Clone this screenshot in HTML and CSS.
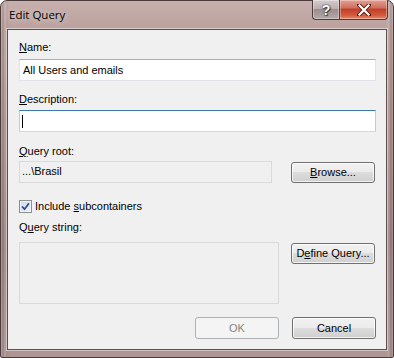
FILE: index.html
```html
<!DOCTYPE html>
<html>
<head>
<meta charset="utf-8">
<title>Edit Query</title>
<link rel="stylesheet" href="styles.css">
</head>
<body>
<div class="window">
  <div class="titlebar">
    <span class="title">Edit Query</span>
    <div class="caption-buttons">
      <div class="cap help"><span class="q">?</span></div>
      <div class="cap close">
        <svg width="14" height="12" viewBox="0 0 14 12"><path d="M2 1 L12 11 M12 1 L2 11" stroke="#5a1a12" stroke-width="4" stroke-linecap="square"/><path d="M2.5 1.5 L11.5 10.5 M11.5 1.5 L2.5 10.5" stroke="#ffffff" stroke-width="2.2" stroke-linecap="square"/></svg>
      </div>
    </div>
  </div>
  <div class="client">
    <div class="label l-name"><u>N</u>ame:</div>
    <div class="textbox">All Users and emails</div>
    <div class="label l-desc"><u>D</u>escription:</div>
    <div class="textbox focused"><span class="caret"></span></div>
    <div class="label l-root"><u>Q</u>uery root:</div>
    <div class="row row-root">
      <div class="readonly root-box">...\Brasil</div>
      <div class="button"><u>B</u>rowse...</div>
    </div>
    <div class="check-row">
      <span class="checkbox">
        <svg width="9" height="9" viewBox="0 0 9 9"><path d="M1 4.5 L3.5 7.2 L8 1.2" fill="none" stroke="#2a4f9a" stroke-width="1.8"/></svg>
      </span>
      <span>Include <u>s</u>ubcontainers</span>
    </div>
    <div class="label l-qs">Q<u>u</u>ery string:</div>
    <div class="row row-qs">
      <div class="readonly qs-box"></div>
      <div class="button">D<u>e</u>fine Query...</div>
    </div>
    <div class="row row-bottom">
      <div class="button disabled">OK</div>
      <div class="button">Cancel</div>
    </div>
  </div>
</div>
</body>
</html>
```

FILE: styles.css
```css
html, body {
  margin: 0;
  padding: 0;
  background: #ffffff;
}

.window {
  width: 394px;
  height: 358px;
  box-sizing: border-box;
  border: 1px solid #4a3a3a;
  border-radius: 7px 7px 2px 2px;
  background:
    linear-gradient(90deg, rgba(255,255,255,0.18) 0px, rgba(0,0,0,0.14) 2px, rgba(255,255,255,0.15) 4px, rgba(0,0,0,0.06) 6px, transparent 8px),
    linear-gradient(270deg, rgba(255,255,255,0.12) 0px, rgba(0,0,0,0.14) 2px, rgba(255,255,255,0.12) 4px, transparent 7px),
    linear-gradient(180deg, #c6afac 0px, #bba19e 30px, #ae9290 120px, #a08685 240px, #ae9694 358px);
  padding: 0 6px 7px 6px;
  display: flex;
  flex-direction: column;
  font-family: "Liberation Sans", Arial, sans-serif;
}

.titlebar {
  height: 28px;
  display: flex;
  align-items: flex-start;
  position: relative;
}

.title {
  font-family: "Open Sans", "Noto Sans", sans-serif;
  font-size: 11.5px;
  color: #000000;
  margin-top: 6px;
  margin-left: 2px;
  text-shadow: 0 0 6px rgba(255,255,255,0.7);
}

.caption-buttons {
  margin-left: auto;
  margin-right: -1px;
  display: flex;
  height: 20px;
  margin-top: -1px;
}

.cap {
  height: 20px;
  box-sizing: border-box;
  border: 1px solid #4c3d3d;
  border-top: none;
  display: flex;
  align-items: center;
  justify-content: center;
  box-shadow: inset 0 0 0 1px rgba(255,255,255,0.35);
}

.help {
  width: 27px;
  border-radius: 0 0 0 4px;
  border-right: none;
  background: linear-gradient(180deg, #d6cccc 0%, #bcaeae 45%, #9e8e8e 50%, #b4a8a8 100%);
}

.q {
  font-family: "Liberation Sans", Arial, sans-serif;
  font-weight: bold;
  font-size: 14px;
  color: #ffffff;
  text-shadow: 0 0 1px #333, 0 0 2px #333, 1px 1px 1px #444;
}

.close {
  width: 49px;
  border-radius: 0 0 4px 0;
  background: linear-gradient(180deg, #e3a194 0%, #d0705e 40%, #c0402a 50%, #d35a3c 80%, #e2876c 100%);
}

.client {
  flex: 1;
  background: #f0f0f0;
  border: 1px solid #5f4e4e;
  box-shadow: 0 0 0 1px rgba(255,255,255,0.45);
  padding: 0 10px 0 11px;
  font-size: 11px;
  color: #000000;
  display: flex;
  flex-direction: column;
}

.label {
  height: 13px;
  line-height: 13px;
}

.l-name { margin-top: 11px; margin-bottom: 5px; }
.l-desc { margin-top: 12px; margin-bottom: 4px; }
.l-root { margin-top: 13px; margin-bottom: 3px; }
.l-qs { margin-top: 8px; margin-bottom: 8px; }

.textbox {
  height: 22px;
  box-sizing: border-box;
  background: #ffffff;
  border: 1px solid #e2e3ea;
  border-top-color: #abadb3;
  border-left-color: #e2e3ea;
  padding: 0 3px;
  line-height: 20px;
  display: flex;
  align-items: center;
}

.textbox.focused {
  border-color: #c5daed;
  border-top-color: #3d7bad;
  border-left-color: #b5cfe7;
  border-right-color: #b5cfe7;
}

.caret {
  width: 1px;
  height: 13px;
  background: #000000;
  margin-left: -1px;
}

.row {
  display: flex;
  align-items: flex-start;
}

.readonly {
  box-sizing: border-box;
  background: #f0f0f0;
  border: 1px solid #dadada;
  padding: 0 2px;
}

.root-box {
  width: 253px;
  height: 22px;
  line-height: 19px;
}

.row-root .button {
  margin-left: 19px;
  margin-top: 1px;
}

.button {
  width: 84px;
  height: 21px;
  box-sizing: border-box;
  border: 1px solid #707070;
  border-radius: 3px;
  background: linear-gradient(180deg, #f2f2f2 0%, #ebebeb 49%, #dddddd 50%, #cfcfcf 100%);
  box-shadow: inset 0 0 0 1px rgba(255,255,255,0.75);
  display: flex;
  align-items: center;
  justify-content: center;
  font-size: 11px;
  line-height: 13px;
}

.button.disabled {
  border-color: #adb2b5;
  background: #f4f4f4;
  color: #838383;
  box-shadow: none;
}

.check-row {
  display: flex;
  align-items: center;
  margin-top: 16px;
  height: 14px;
}

.checkbox {
  width: 13px;
  height: 13px;
  box-sizing: border-box;
  border: 1px solid #8e8f8f;
  background: linear-gradient(135deg, #cfd8e4 0%, #f4f6f9 100%);
  box-shadow: inset 0 0 0 1px #eef1f5;
  display: flex;
  align-items: center;
  justify-content: center;
  margin-right: 3px;
}

.checkbox svg {
  display: block;
}

.qs-box {
  width: 260px;
  height: 62px;
}

.row-qs .button {
  margin-left: 12px;
  margin-top: 1px;
  width: 84px;
}

.row-bottom {
  margin-top: 13px;
  justify-content: flex-end;
  gap: 13px;
}

.row-bottom .button {
  height: 22px;
}

u {
  text-decoration: underline;
  text-underline-offset: 1px;
}
```
